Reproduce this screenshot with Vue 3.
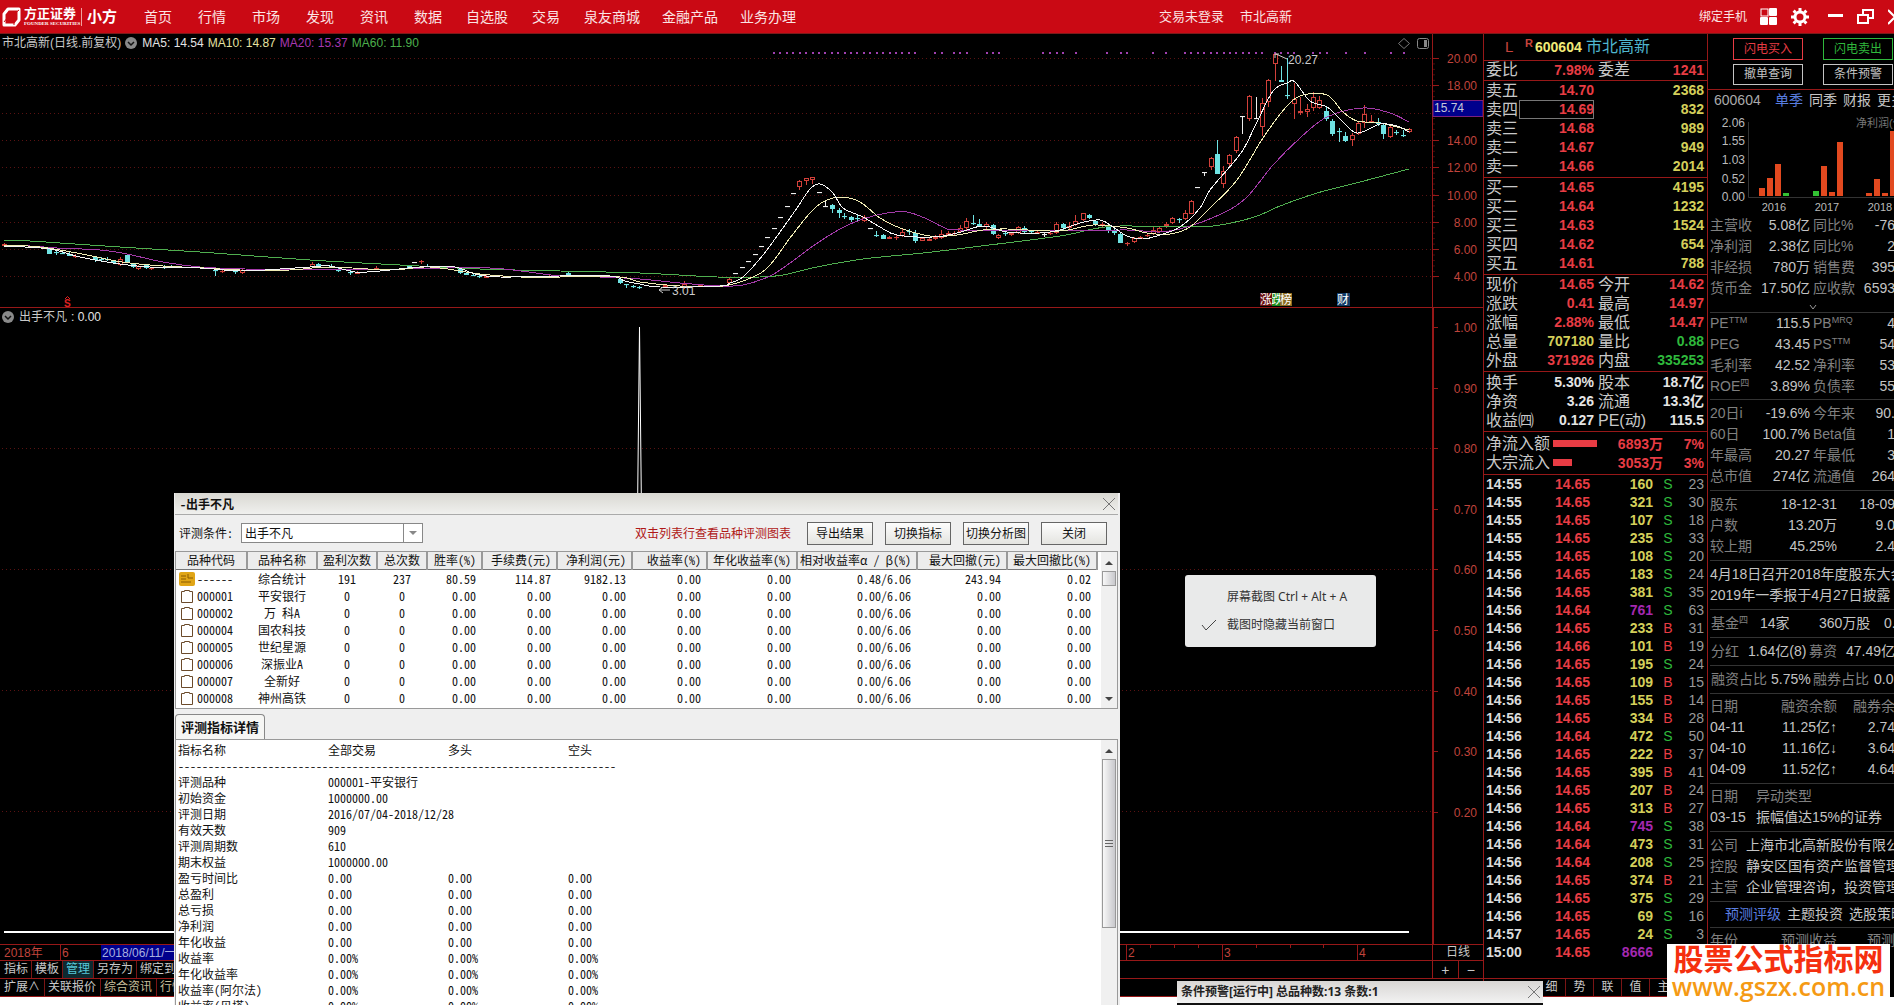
<script setup>
const nav = ['首页', '行情', '市场', '发现', '资讯', '数据', '自选股', '交易', '泉友商城', '金融产品', '业务办理']

/* Catmull-Rom smoothing of a flat x,y list */
function curve(flat) {
  const p = []
  for (let i = 0; i < flat.length; i += 2) p.push([flat[i], flat[i + 1]])
  let d = `M${p[0][0]} ${p[0][1]}`
  for (let i = 0; i < p.length - 1; i++) {
    const a = p[i - 1] || p[i], b = p[i], c = p[i + 1], e = p[i + 2] || c
    d += `C${b[0] + (c[0] - a[0]) / 6} ${b[1] + (c[1] - a[1]) / 6} ${c[0] - (e[0] - b[0]) / 6} ${c[1] - (e[1] - b[1]) / 6} ${c[0]} ${c[1]}`
  }
  return d
}
const averages = [
  { color: '#4fae4f', d: curve([4, 241, 30, 241, 60, 243, 120, 247, 200, 252, 310, 260, 400, 265, 480, 269, 560, 271, 640, 273, 717, 277, 760, 277, 783, 275, 817, 267, 863, 259, 923, 253, 973, 247, 1060, 236, 1093, 229, 1120, 226, 1187, 227, 1213, 226, 1240, 221, 1260, 215, 1280, 206, 1317, 193, 1360, 182, 1409, 169]) },
  { color: '#a33aa8', d: curve([4, 246, 30, 246, 57, 248, 100, 250, 127, 254, 163, 262, 200, 267, 245, 269, 300, 269, 400, 269, 490, 268, 560, 276, 600, 277, 640, 279, 680, 283, 720, 286, 743, 285, 770, 276, 790, 263, 813, 246, 840, 229, 863, 219, 887, 213, 907, 212, 927, 219, 943, 227, 960, 230, 1060, 231, 1127, 230, 1160, 232, 1187, 227, 1223, 213, 1247, 197, 1273, 165, 1300, 138, 1327, 117, 1363, 108, 1390, 113, 1409, 122]) },
  { color: '#f0ecb4', d: curve([4, 245, 40, 247, 82, 254, 122, 262, 163, 266, 204, 268, 240, 270, 290, 270, 330, 267, 390, 270, 430, 267, 480, 274, 520, 277, 560, 277, 620, 277, 640, 282, 680, 286, 723, 286, 753, 277, 770, 265, 790, 238, 810, 213, 823, 202, 840, 197, 860, 202, 880, 218, 900, 228, 930, 236, 957, 235, 983, 230, 1007, 229, 1060, 231, 1093, 225, 1127, 228, 1147, 233, 1170, 234, 1190, 227, 1210, 208, 1237, 180, 1263, 138, 1287, 106, 1303, 95, 1327, 95, 1343, 112, 1357, 121, 1380, 123, 1409, 130]) },
  { color: '#f4f4f4', d: curve([4, 246, 50, 249, 80, 257, 120, 264, 150, 267, 200, 268, 240, 271, 280, 269, 310, 267, 330, 266, 355, 272, 380, 271, 420, 267, 455, 267, 475, 274, 500, 277, 560, 276, 610, 276, 625, 281, 640, 284, 660, 287, 720, 286, 730, 283, 743, 277, 763, 255, 780, 232, 797, 208, 810, 189, 820, 184, 833, 193, 843, 208, 863, 217, 880, 227, 897, 235, 933, 237, 957, 233, 983, 226, 1007, 232, 1040, 233, 1060, 230, 1080, 223, 1100, 220, 1113, 227, 1127, 236, 1143, 239, 1160, 235, 1180, 227, 1200, 208, 1210, 190, 1227, 170, 1243, 150, 1257, 122, 1273, 91, 1287, 83, 1295, 82, 1310, 101, 1327, 107, 1340, 119, 1357, 133, 1380, 124, 1397, 126, 1409, 132]) },
]

/* kind, x, high, body top, body bottom, low */
const candles = [
  ['u', 4, 243, 244, 246, 247], ['d', 49, 248, 249, 254, 254], ['d', 56, 250, 252, 253, 255], ['d', 62, 251, 253, 254, 254], ['d', 69, 252, 254, 256, 256], ['u', 75, 254, 256, 257, 258],
  ['d', 95, 256, 257, 260, 262], ['d', 101, 257, 259, 260, 261], ['d', 107, 257, 259, 260, 261], ['d', 113, 260, 261, 263, 264], ['u', 120, 257, 259, 265, 266], ['d', 127, 254, 255, 262, 263], ['d', 133, 263, 264, 267, 268], ['u', 138, 265, 266, 269, 270],
  ['d', 146, 264, 265, 268, 269], ['u', 151, 267, 268, 269, 270], ['d', 164, 265, 267, 268, 269], ['d', 171, 265, 266, 268, 268], ['d', 215, 269, 270, 271, 276], ['u', 222, 270, 271, 272, 273], ['d', 235, 270, 271, 272, 274], ['u', 242, 269, 270, 273, 274],
  ['u', 312, 262, 264, 267, 267], ['d', 318, 263, 264, 266, 266], ['d', 331, 264, 266, 267, 267], ['d', 338, 268, 270, 271, 272], ['d', 350, 270, 272, 273, 275], ['u', 357, 271, 272, 274, 274], ['u', 376, 266, 268, 269, 270],
  ['d', 409, 265, 266, 268, 269], ['w', 414, 262, 262, 263, 263], ['u', 421, 260, 261, 262, 264], ['d', 427, 264, 266, 267, 267], ['d', 460, 267, 269, 273, 274], ['d', 466, 272, 273, 275, 275], ['d', 473, 273, 275, 276, 276], ['d', 479, 275, 276, 277, 278], ['u', 486, 275, 276, 278, 278],
  ['u', 549, 275, 276, 278, 278], ['d', 568, 271, 273, 275, 275], ['d', 620, 278, 279, 283, 284], ['d', 626, 284, 284, 285, 288], ['d', 633, 285, 286, 287, 288], ['d', 639, 286, 287, 288, 289],
  ['u', 665, 284, 285, 287, 287], ['u', 684, 281, 284, 288, 289], ['u', 700, 284, 285, 286, 286], ['u', 729, 278, 279, 283, 283],
  ['w', 735, 273, 273, 274, 274], ['w', 742, 267, 267, 268, 268], ['w', 748, 261, 261, 262, 262], ['w', 755, 254, 254, 255, 255], ['w', 761, 246, 246, 247, 247], ['w', 767, 237, 237, 238, 238], ['w', 774, 228, 228, 229, 229], ['w', 780, 217, 217, 218, 218], ['w', 787, 206, 206, 207, 207], ['w', 793, 193, 193, 194, 194],
  ['u', 799, 180, 181, 187, 190], ['u', 806, 178, 178, 181, 185], ['u', 812, 177, 177, 180, 184], ['w', 819, 192, 192, 193, 193], ['w', 825, 201, 206, 207, 207], ['d', 832, 204, 205, 209, 213], ['d', 839, 208, 210, 213, 218], ['d', 844, 213, 216, 217, 219], ['d', 851, 216, 217, 220, 222], ['d', 857, 215, 218, 219, 221], ['u', 864, 215, 217, 221, 222],
  ['w', 870, 228, 228, 229, 229], ['d', 876, 231, 235, 236, 237], ['d', 883, 234, 235, 239, 239], ['u', 889, 236, 237, 239, 239], ['u', 896, 235, 237, 238, 240], ['u', 902, 228, 232, 236, 237], ['d', 909, 229, 231, 232, 235], ['d', 915, 230, 233, 241, 243], ['u', 922, 237, 238, 241, 241], ['u', 929, 238, 239, 241, 241], ['u', 935, 235, 237, 239, 240], ['u', 941, 230, 234, 238, 239], ['u', 948, 231, 233, 235, 236], ['u', 954, 231, 233, 234, 236], ['u', 960, 225, 228, 232, 233],
  ['u', 966, 218, 221, 228, 230], ['d', 973, 215, 223, 224, 225], ['d', 979, 219, 224, 226, 227], ['u', 986, 222, 224, 227, 230], ['d', 993, 224, 225, 234, 235], ['u', 998, 234, 235, 238, 239], ['d', 1005, 231, 233, 234, 236], ['u', 1011, 232, 233, 235, 236], ['u', 1018, 226, 227, 233, 234], ['d', 1024, 226, 228, 232, 233], ['d', 1031, 230, 231, 232, 234], ['u', 1037, 231, 232, 234, 234], ['w', 1044, 232, 234, 235, 237], ['u', 1050, 230, 233, 234, 235], ['u', 1056, 222, 224, 233, 234],
  ['d', 1063, 223, 224, 228, 230], ['u', 1069, 222, 226, 228, 229], ['u', 1075, 215, 221, 225, 226], ['u', 1083, 213, 213, 220, 221], ['d', 1089, 214, 215, 218, 219], ['d', 1095, 220, 221, 225, 226], ['u', 1102, 222, 224, 225, 227], ['d', 1108, 223, 225, 230, 233], ['d', 1114, 229, 230, 233, 235], ['d', 1120, 233, 234, 243, 243], ['u', 1127, 242, 243, 244, 246], ['u', 1134, 237, 238, 242, 243], ['u', 1140, 236, 237, 239, 239], ['u', 1147, 233, 235, 236, 237], ['u', 1153, 226, 230, 234, 235], ['u', 1159, 226, 228, 232, 233], ['u', 1166, 222, 224, 226, 228],
  ['u', 1172, 217, 218, 223, 224], ['d', 1179, 218, 219, 220, 223], ['u', 1185, 210, 213, 219, 220], ['u', 1191, 200, 201, 214, 214], ['w', 1197, 187, 187, 188, 188], ['w', 1204, 172, 172, 173, 176], ['u', 1211, 157, 158, 167, 170], ['d', 1217, 140, 154, 174, 174], ['u', 1223, 166, 171, 184, 188], ['u', 1229, 154, 155, 164, 167], ['u', 1236, 136, 137, 151, 153], ['w', 1242, 116, 116, 117, 134], ['u', 1249, 95, 96, 119, 121], ['w', 1256, 97, 118, 119, 119], ['u', 1262, 98, 103, 127, 136], ['u', 1268, 79, 80, 102, 107], ['u', 1275, 53, 54, 64, 81],
  ['d', 1281, 66, 80, 82, 82], ['d', 1287, 58, 95, 96, 99], ['u', 1294, 83, 99, 104, 119], ['u', 1300, 97, 111, 113, 115], ['u', 1307, 104, 109, 112, 117], ['u', 1313, 92, 97, 108, 111], ['u', 1319, 96, 100, 108, 109], ['d', 1326, 106, 111, 119, 121], ['d', 1332, 119, 121, 134, 136], ['d', 1339, 128, 131, 132, 142], ['d', 1345, 132, 136, 141, 142], ['u', 1352, 133, 135, 140, 146], ['u', 1358, 121, 123, 134, 135], ['u', 1364, 105, 114, 123, 128], ['u', 1371, 115, 121, 122, 123],
  ['d', 1378, 118, 122, 124, 126], ['d', 1383, 124, 125, 134, 139], ['u', 1390, 126, 127, 137, 138], ['d', 1396, 130, 132, 133, 135], ['d', 1403, 130, 135, 136, 137], ['u', 1409, 128, 129, 132, 133],
]
const run = (a, n) => Array.from({ length: n }, (_, i) => a + i * 6.42)
const dots = [...run(773, 23), 934, 941, 953, 959, 966, 986, 992, 998, 1042, 1049, 1056, 1062, 1075, 1106, 1120, 1126, 1152, 1165, ...run(1184, 13), 1274, 1280, 1287, 1293, 1312, 1319, 1326, 1345, 1364, 1390, 1403]
const priceTicks = ['20.00', '18.00', '16.00', '14.00', '12.00', '10.00', '8.00', '6.00', '4.00'].map((t, i) => ({ t, y: Math.round(58 + i * 27.3) }))
const unitTicks = ['1.00', '0.90', '0.80', '0.70', '0.60', '0.50', '0.40', '0.30', '0.20'].map((t, i) => ({ t, y: Math.round(327 + i * 60.6) }))

const sells = [['卖五', '14.70', 2368], ['卖四', '14.69', 832], ['卖三', '14.68', 989], ['卖二', '14.67', 949], ['卖一', '14.66', 2014]]
const buys = [['买一', '14.65', 4195], ['买二', '14.64', 1232], ['买三', '14.63', 1524], ['买四', '14.62', 654], ['买五', '14.61', 788]]
const stats = [
  ['现价', '14.65', 'r', '今开', '14.62', 'r'], ['涨跌', '0.41', 'r', '最高', '14.97', 'r'], ['涨幅', '2.88%', 'r', '最低', '14.47', 'r'],
  ['总量', '707180', 'y', '量比', '0.88', 'g'], ['外盘', '371926', 'r', '内盘', '335253', 'g'],
]
const basics = [['换手', '5.30%', 'w', '股本', '18.7亿', 'w'], ['净资', '3.26', 'w', '流通', '13.3亿', 'w'], ['收益㈣', '0.127', 'w', 'PE(动)', '115.5', 'w']]
const ticks = `14:55 14.65 160 S 23
14:55 14.65 321 S 30
14:55 14.65 107 S 18
14:55 14.65 235 S 33
14:55 14.65 108 S 20
14:56 14.65 183 S 24
14:56 14.65 381 S 35
14:56 14.64 761 S 63
14:56 14.65 233 B 31
14:56 14.66 101 B 19
14:56 14.65 195 S 24
14:56 14.65 109 B 15
14:56 14.65 155 B 14
14:56 14.65 334 B 28
14:56 14.64 472 S 50
14:56 14.65 222 B 37
14:56 14.65 395 B 41
14:56 14.65 207 B 24
14:56 14.65 313 B 27
14:56 14.64 745 S 38
14:56 14.64 473 S 31
14:56 14.64 208 S 25
14:56 14.65 374 B 21
14:56 14.65 375 S 29
14:56 14.65 69 S 16
14:57 14.65 24 S 3
15:00 14.65 8666`.split('\n').map((l) => l.split(' '))

const bars = [[1759, 8], [1767, 18], [1775, 32], [1783, 3, 1], [1813, 5, 1], [1821, 30], [1829, 4], [1837, 54], [1866, 3], [1874, 17], [1882, 3], [1890, 65]]
const finance = [['主营收', '5.08亿', '同比%', '-76'], ['净利润', '2.38亿', '同比%', '2'], ['非经损', '780万', '销售费', '395'], ['货币金', '17.50亿', '应收款', '6593']]
const ratios = [['PE', '115.5', 'PB', '4', 'TTM', 'MRQ'], ['PEG', '43.45', 'PS', '54', '', 'TTM'], ['毛利率', '42.52', '净利率', '53'], ['ROE', '3.89%', '负债率', '55', '四', '']]
const trend = [['20日i', '-19.6%', '今年来', '90.'], ['60日', '100.7%', 'Beta值', '1'], ['年最高', '20.27', '年最低', '3'], ['总市值', '274亿', '流通值', '264']]
const holders = [['股东', '18-12-31', '18-09'], ['户数', '13.20万', '9.0'], ['较上期', '45.25%', '2.4']]
const margin = [['04-11', '11.25亿↑', '2.74'], ['04-10', '11.16亿↓', '3.64'], ['04-09', '11.52亿↑', '4.64']]
const company = [['公司', '上海市北高新股份有限公'], ['控股', '静安区国有资产监督管理'], ['主营', '企业管理咨询，投资管理']]

const cols = [71, 70, 60, 50, 55, 75, 75, 75, 90, 120, 90, 90]
const heads = ['品种代码', '品种名称', '盈利次数', '总次数', '胜率(%)', '手续费(元)', '净利润(元)', '收益率(%)', '年化收益率(%)', '相对收益率α / β(%)', '最大回撤(元)', '最大回撤比(%)']
const zero = (code, name) => [code, name, '0', '0', '0.00', '0.00', '0.00', '0.00', '0.00', '0.00/6.06', '0.00', '0.00']
const rows = [
  ['------', '综合统计', '191', '237', '80.59', '114.87', '9182.13', '0.00', '0.00', '0.48/6.06', '243.94', '0.02'],
  zero('000001', '平安银行'), zero('000002', '万 科A'), zero('000004', '国农科技'), zero('000005', '世纪星源'),
  zero('000006', '深振业A'), zero('000007', '全新好'), zero('000008', '神州高铁'),
]
const details = [
  ['评测品种', '000001-平安银行'], ['初始资金', '1000000.00'], ['评测日期', '2016/07/04-2018/12/28'], ['有效天数', '909'], ['评测周期数', '610'], ['期末权益', '1000000.00'],
  ...['盈亏时间比', '总盈利', '总亏损', '净利润', '年化收益'].map((n) => [n, '0.00', '0.00', '0.00']),
  ...['收益率', '年化收益率', '收益率(阿尔法)', '收益率(贝塔)'].map((n) => [n, '0.00%', '0.00%', '0.00%']),
]
const dashes = '-'.repeat(73)
</script>

<template>
  <div class="app">
    <header class="top">
      <div class="brand">
        <svg width="19" height="20" viewBox="0 0 19 20"><path d="M6 2H17V13L13 18H2V7Z" fill="none" stroke="#fff" stroke-width="3" stroke-linejoin="round" /><path d="M12 18V7L17 3M2 15L6 10" stroke="#ca0914" stroke-width="1" fill="none" /></svg>
        <div class="brand-name"><b>方正证券</b><small>FOUNDER SECURITIES</small></div>
        <i></i><strong>小方</strong>
      </div>
      <nav><a v-for="n in nav" :key="n" href="#">{{ n }}</a></nav>
      <div class="status"><span>交易未登录</span><span>市北高新</span></div>
      <div class="tools">
        <a href="#">绑定手机</a>
        <button aria-label="布局"><svg width="17" height="17" viewBox="0 0 17 17"><rect x="1" y="1" width="7" height="7" fill="none" stroke="#fff" /><rect x="9" y="0" width="8" height="8" rx="1" fill="#fff" /><rect x="0" y="9" width="8" height="8" rx="1" fill="#fff" /><rect x="9" y="9" width="8" height="8" rx="1" fill="#fff" /></svg></button>
        <button aria-label="设置"><svg width="20" height="20" viewBox="0 0 20 20"><circle cx="10" cy="10" r="5" fill="none" stroke="#fff" stroke-width="3" /><g stroke="#fff" stroke-width="3"><path d="M10 1V4M10 16V19M1 10H4M16 10H19M3.600 3.600L5.700 5.700M14.300 14.300L16.400 16.400M3.600 16.400L5.700 14.300M14.300 5.700L16.400 3.600" /></g></svg></button>
        <button aria-label="最小化"><svg width="16" height="18" viewBox="0 0 16 18"><path d="M0 7.500H15" stroke="#fff" stroke-width="3" /></svg></button>
        <button aria-label="还原"><svg width="18" height="18" viewBox="0 0 18 18"><path d="M6 6V2H16V10H12M1 7H11V15H1Z" fill="none" stroke="#fff" stroke-width="2" /></svg></button>
        <button aria-label="退出"><svg width="6" height="18" viewBox="0 0 6 18"><path d="M0 2L14 16M0 16L14 2" stroke="#fff" stroke-width="2" /></svg></button>
      </div>
    </header>

    <main>
      <section class="market">
        <div class="pane">
          <div class="plot">
            <div class="legend">
              <span>市北高新(日线.前复权)</span>
              <svg width="13" height="13" viewBox="0 0 13 13"><circle cx="6" cy="6" r="6" fill="#8a8a8a" /><path d="M3 5L6 8L9 5" fill="none" stroke="#111" stroke-width="1.500" /></svg>
              <span class="w">MA5: 14.54</span><span class="ma10">MA10: 14.87</span><span class="ma20">MA20: 15.37</span><span class="ma60">MA60: 11.90</span>
            </div>
            <svg class="chart" viewBox="0 34 1432 273">
              <path v-for="t in priceTicks" :key="t.t" :d="`M2 ${t.y + 0.5}H1432`" class="grid" />
              <rect v-for="x in dots" :key="x" :x="Math.round(x)" y="52" width="2" height="2" fill="#a040b0" />
              <g v-for="c in candles" :key="c[1]" :class="'k' + c[0]">
                <path :d="`M${c[1] + 0.5} ${c[2]}V${c[3]}M${c[1] + 0.5} ${c[4]}V${c[5]}`" />
                <rect :x="c[1] - 1.5" :y="c[3] + 0.5" :width="4" :height="Math.max(c[4] - c[3] - 1, 0.1)" />
              </g>
              <path v-for="m in averages" :key="m.color" :d="m.d" fill="none" :stroke="m.color" shape-rendering="crispEdges" />
              <path d="M1276 54L1287 59M1275 58V54H1279M659 290H670M663 287L659 290L663 293" fill="none" stroke="#ccc" />
              <text x="1288" y="64" class="mark">20.27</text>
              <text x="672" y="295" class="mark">3.01</text>
              <path d="M65 299L67.500 296.500L70 299" fill="none" stroke="#e02020" /><text x="64" y="307" class="sell">S</text>
              <rect x="1272" y="293" width="9" height="13" fill="#1c8a1c" /><text x="1271" y="304" class="badge">跌</text>
              <rect x="1260" y="293" width="12" height="13" fill="#6a1010" /><text x="1260" y="304" class="badge">涨</text>
              <rect x="1280" y="293" width="12" height="13" fill="#8a6a20" /><text x="1280" y="304" class="badge">榜</text>
              <rect x="1337" y="293" width="13" height="13" fill="#123a66" /><text x="1337" y="304" class="badge">财</text>
              <path d="M1404 38.500L1409.500 43.500L1404 48.500L1398.500 43.500Z" fill="none" stroke="#777" />
              <rect x="1417.500" y="38.500" width="11" height="10" rx="2" fill="none" stroke="#888" /><rect x="1424" y="40" width="3" height="7" fill="#888" />
            </svg>
          </div>
          <svg class="axis" viewBox="1432 34 51 273">
            <path d="M1432.500 34V307" class="rule" />
            <path v-for="i in 41" :key="i" :d="`M1433 ${53 + i * 5.46}h2`" stroke="#4a0b0b" />
            <g v-for="t in priceTicks" :key="t.t"><path :d="`M1433 ${t.y + 0.5}h6`" class="rule" /><text v-if="t.t !== '16.00'" x="1477" :y="t.y + 5">{{ t.t }}</text></g>
            <rect x="1433" y="100.500" width="50" height="16" fill="#00008c" stroke="#7a2080" /><text x="1434" y="112" class="cursor">15.74</text>
          </svg>
        </div>

        <div class="pane line-top">
          <div class="plot">
            <div class="legend">
              <svg width="13" height="13" viewBox="0 0 13 13"><circle cx="6" cy="6" r="6" fill="#8a8a8a" /><path d="M3 5L6 8L9 5" fill="none" stroke="#111" stroke-width="1.500" /></svg>
              <span>出手不凡</span><span class="w">: 0.00</span>
            </div>
            <svg class="chart" viewBox="0 308 1432 636">
              <path v-for="y in [448, 569, 690, 811]" :key="y" :d="`M2 ${y + 0.5}H1432`" class="grid" />
              <path d="M633 932L639.500 327L646 932" fill="none" stroke="#fff" />
              <path d="M4 932H633M646 932H1409" fill="none" stroke="#fff" stroke-width="2" />
            </svg>
          </div>
          <svg class="axis" viewBox="1432 308 51 636">
            <path d="M1433 308V944" class="rule" stroke-width="2" />
            <g v-for="t in unitTicks" :key="t.t"><path :d="`M1433 ${t.y + 0.5}h5`" class="rule" /><text x="1477" :y="t.y + 5">{{ t.t }}</text></g>
          </svg>
        </div>

        <div class="pane line-top">
          <div class="plot">
            <svg class="chart" viewBox="0 945 1432 15">
              <path d="M60.500 945V960M1126.500 945V960M1222.500 945V960M1357.500 945V960M1150.500 945V948M1174.500 945V948M1198.500 945V948M1256.500 945V948M1290.500 945V948M1323.500 945V948" class="rule" />
              <rect x="101" y="945" width="200" height="15" fill="#00008c" />
              <text x="4" y="957" class="date">2018年</text><text x="62" y="957" class="date">6</text><text x="102" y="957" class="date hot">2018/06/11/一</text>
              <text x="1128" y="957" class="date">2</text><text x="1224" y="957" class="date">3</text><text x="1359" y="957" class="date">4</text>
            </svg>
          </div>
          <div class="axis-cell">日线</div>
        </div>
        <div class="pane line-top">
          <div class="tabs"><a href="#">指标</a><a href="#">模板</a><a href="#" class="on">管理</a><a href="#">另存为</a><a href="#">绑定到</a></div>
          <div class="axis-cell zoomers"><button>+</button><button>−</button></div>
        </div>
        <div class="pane line-top last">
          <div class="tabs warm"><a href="#">扩展∧</a><a href="#">关联报价</a><a href="#">综合资讯</a><a href="#">行情</a></div>
        </div>
      </section>

      <section class="quote">
        <h1><span>L</span><sup>R</sup><b>600604</b><em>市北高新</em></h1>
        <div class="grp"><div class="q ratio"><span>委比</span><b class="r">7.98%</b><span>委差</span><b class="r">1241</b></div></div>
        <div class="grp">
          <div v-for="s in sells" :key="s[0]" class="q"><span>{{ s[0] }}</span><b class="r" :class="{ boxed: s[0] === '卖四' }">{{ s[1] }}</b><span></span><b class="y">{{ s[2] }}</b></div>
        </div>
        <div class="grp">
          <div v-for="s in buys" :key="s[0]" class="q"><span>{{ s[0] }}</span><b class="r">{{ s[1] }}</b><span></span><b class="y">{{ s[2] }}</b></div>
        </div>
        <div class="grp">
          <div v-for="s in stats" :key="s[0]" class="q"><span>{{ s[0] }}</span><b :class="s[2]">{{ s[1] }}</b><span>{{ s[3] }}</span><b :class="s[5]">{{ s[4] }}</b></div>
        </div>
        <div class="grp wide">
          <div v-for="s in basics" :key="s[0]" class="q"><span>{{ s[0] }}</span><b :class="s[2]">{{ s[1] }}</b><span>{{ s[3] }}</span><b :class="s[5]">{{ s[4] }}</b></div>
        </div>
        <div class="grp flows">
          <div class="flow"><span>净流入额</span><i style="width: 44px"></i><b>6893万</b><b class="pct">7%</b></div>
          <div class="flow"><span>大宗流入</span><i style="width: 19px"></i><b>3053万</b><b class="pct">3%</b></div>
        </div>
        <table class="deals">
          <colgroup><col style="width: 40px" /><col style="width: 66px" /><col style="width: 63px" /><col style="width: 30px" /><col /></colgroup>
          <tbody>
            <tr v-for="(t, i) in ticks" :key="i">
              <td>{{ t[0] }}</td><td class="r">{{ t[1] }}</td><td :class="+t[2] > 500 ? 'm' : 'y'">{{ t[2] }}</td><td :class="t[3] === 'B' ? 'r' : 'g'">{{ t[3] }}</td><td class="n">{{ t[4] }}</td>
            </tr>
          </tbody>
        </table>
        <div class="quote-tabs"><a href="#">细</a><a href="#">势</a><a href="#">联</a><a href="#">值</a><a href="#">主</a></div>
      </section>

      <aside class="info">
        <div class="orders">
          <button class="r">闪电买入</button><button class="g">闪电卖出</button><button>撤单查询</button><button>条件预警</button>
        </div>
        <div class="periods"><span>600604</span><a href="#" class="on">单季</a><a href="#">同季</a><a href="#">财报</a><a href="#">更多</a></div>
        <svg class="bars" viewBox="1708 112 186 104" width="186" height="104">
          <path d="M1748.500 123V198.500H1894" fill="none" stroke="#333" />
          <rect v-for="b in bars" :key="b[0]" :x="b[0]" :y="197 - b[1]" width="6" :height="b[1]" :fill="b[2] ? '#33c233' : '#e2491f'" />
          <g class="ylab"><text x="1745" y="128">2.06</text><text x="1745" y="146">1.55</text><text x="1745" y="165">1.03</text><text x="1745" y="184">0.52</text><text x="1745" y="202">0.00</text></g>
          <g class="xlab"><text x="1774" y="212">2016</text><text x="1827" y="212">2017</text><text x="1880" y="212">2018</text></g>
          <text x="1856" y="128" class="unit">净利润(亿)</text>
        </svg>
        <div class="blk flat"><div v-for="f in finance" :key="f[0]" class="pair"><span>{{ f[0] }}</span><b>{{ f[1] }}</b><span>{{ f[2] }}</span><b>{{ f[3] }}</b></div><div class="more"><svg width="8" height="6" viewBox="0 0 8 6"><path d="M1 1L4 5L7 1" fill="none" stroke="#999" /></svg></div></div>
        <div class="blk snug"><div v-for="f in ratios" :key="f[0]" class="pair"><span>{{ f[0] }}<sup v-if="f[4]">{{ f[4] }}</sup></span><b>{{ f[1] }}</b><span>{{ f[2] }}<sup v-if="f[5]">{{ f[5] }}</sup></span><b>{{ f[3] }}</b></div></div>
        <div class="blk"><div v-for="f in trend" :key="f[0]" class="pair"><span>{{ f[0] }}</span><b>{{ f[1] }}</b><span>{{ f[2] }}</span><b>{{ f[3] }}</b></div></div>
        <div class="blk"><div v-for="f in holders" :key="f[0]" class="trio"><span>{{ f[0] }}</span><b>{{ f[1] }}</b><b>{{ f[2] }}</b></div></div>
        <div class="blk news"><p>4月18日召开2018年度股东大会</p><p>2019年一季报于4月27日披露</p></div>
        <div class="blk"><div class="spread fund"><span>基金<sup>四</sup></span><b>14家</b><b>360万股</b><b>0.</b></div></div>
        <div class="blk"><div class="spread bonus"><span>分红</span><b>1.64亿(8)</b><span>募资</span><b>47.49亿</b></div></div>
        <div class="blk"><div class="spread loan"><span>融资占比</span><b>5.75%</b><span>融券占比</span><b>0.0</b></div></div>
        <div class="blk tight">
          <div class="trio"><span>日期</span><span>融资余额</span><span>融券余</span></div>
          <div v-for="f in margin" :key="f[0]" class="trio"><b>{{ f[0] }}</b><b>{{ f[1] }}</b><b>{{ f[2] }}</b></div>
        </div>
        <div class="blk tight"><div class="event"><span>日期</span><span>异动类型</span></div><div class="event"><b>03-15</b><b>振幅值达15%的证券</b></div></div>
        <div class="blk"><div v-for="c in company" :key="c[0]" class="firm"><span>{{ c[0] }}</span><b>{{ c[1] }}</b></div></div>
        <div class="blk topics"><a href="#" class="on">预测评级</a><a href="#">主题投资</a><a href="#">选股策略</a></div>
        <div class="blk tight"><div class="trio"><span>年份</span><span>预测收益</span><span>预测</span></div></div>
      </aside>
    </main>
    <div class="strip"></div>

    <section class="dialog">
      <div class="dlg-title"><b>-出手不凡</b><button aria-label="关闭窗口"><svg width="12" height="12" viewBox="0 0 12 12"><path d="M0 0L12 12M0 12L12 0" stroke="#777" /></svg></button></div>
      <div class="dlg-bar">
        <label for="cond">评测条件:</label>
        <div class="combo"><select id="cond"><option>出手不凡</option></select></div>
        <em>双击列表行查看品种评测图表</em>
        <button>导出结果</button><button>切换指标</button><button>切换分析图</button><button>关闭</button>
      </div>
      <div class="list">
        <table>
          <colgroup><col v-for="(c, i) in cols" :key="i" :style="{ width: c + 'px' }" /></colgroup>
          <thead><tr><th v-for="h in heads" :key="h">{{ h }}</th></tr></thead>
          <tbody>
            <tr v-for="(r, i) in rows" :key="i">
              <td v-for="(c, j) in r" :key="j">
                <template v-if="j === 0">
                  <svg v-if="i === 0" width="16" height="14" viewBox="0 0 16 14"><rect width="16" height="14" rx="2" fill="#e0a516" /><path d="M2 4H7M2 7H7M2 10H12M9 2V6H14" stroke="#8a5a00" fill="none" /></svg>
                  <svg v-else width="16" height="14" viewBox="0 0 16 14"><path d="M2.500 2.500H5.500V1.500H10.500V2.500H13.500V13.500H2.500Z" fill="#fff" stroke="#6b4a2a" /></svg>
                </template>{{ c }}
              </td>
            </tr>
          </tbody>
        </table>
        <div class="scroll"><svg width="8" height="5" viewBox="0 0 8 5"><path d="M0 5L4 1L8 5Z" fill="#444" /></svg><i class="thumb short"></i><svg class="down" width="8" height="5" viewBox="0 0 8 5"><path d="M0 0L4 4L8 0Z" fill="#444" /></svg></div>
      </div>
      <div class="tabrow"><button>评测指标详情</button></div>
      <div class="detail">
        <table>
          <colgroup><col style="width: 150px" /><col style="width: 120px" /><col style="width: 120px" /><col /></colgroup>
          <thead><tr><th>指标名称</th><th>全部交易</th><th>多头</th><th>空头</th></tr></thead>
          <tbody>
            <tr><td colspan="4">{{ dashes }}</td></tr>
            <tr v-for="d in details" :key="d[0]"><td>{{ d[0] }}</td><td>{{ d[1] }}</td><td>{{ d[2] }}</td><td>{{ d[3] }}</td></tr>
          </tbody>
        </table>
        <div class="scroll"><svg width="8" height="5" viewBox="0 0 8 5"><path d="M0 5L4 1L8 5Z" fill="#444" /></svg><i class="thumb long"></i></div>
      </div>
    </section>

    <div class="popup">
      <button><i></i>屏幕截图 Ctrl + Alt + A</button>
      <button><i><svg width="16" height="12" viewBox="0 0 16 12"><path d="M1 6L5 11L15 1" fill="none" stroke="#444" /></svg></i>截图时隐藏当前窗口</button>
    </div>

    <div class="alert"><b>条件预警[运行中] 总品种数:13 条数:1</b><button aria-label="关闭预警"><svg width="12" height="12" viewBox="0 0 12 12"><path d="M0 0L12 12M0 12L12 0" stroke="#777" /></svg></button></div>

    <div class="watermark"><b>股票公式指标网</b><span>www.gszx.com.cn</span></div>
  </div>
</template>

<style>
body { background: #000; }
</style>

<style scoped>
* { box-sizing: border-box; }
.app { position: relative; height: 100vh; overflow: hidden; background: #000; color: #c8c8c8; font: 12px/18px "Liberation Sans", "Noto Sans CJK SC", sans-serif; display: flex; flex-direction: column; }
a { color: inherit; text-decoration: none; }
button { font: inherit; color: inherit; background: none; border: 0; padding: 0; }
svg { display: block; }
b, em, strong, th, h1 { font-weight: inherit; font-style: normal; }
.r { color: #e83c44; } .y { color: #d4cf5a; } .g { color: #2fb83c; } .w { color: #e4e4e4; } .m { color: #a428b0; }

.top { height: 34px; flex: none; background: #ca0914; border-bottom: 1px solid #7a1a1a; color: #fbe4e4; display: flex; align-items: center; position: relative; }
.brand { width: 142px; display: flex; align-items: center; padding-left: 2px; color: #fff; }
.brand-name { margin-left: 3px; width: 52px; }
.brand-name b { display: block; font-size: 13px; font-weight: 700; line-height: 14px; }
.brand-name small { display: block; font: 700 5px/5px "Liberation Serif", serif; white-space: nowrap; }
.brand > i { width: 1px; height: 18px; background: #f0a0a0; margin: 0 5px; }
.brand strong { font-size: 15px; font-weight: 700; }
nav { display: flex; gap: 22px; font-size: 14px; }
nav a { min-width: 32px; text-align: center; }
.status { display: flex; gap: 16px; font-size: 13px; position: absolute; left: 1159px; }
.tools { margin-left: auto; display: flex; align-items: center; gap: 13px; }
.tools button:nth-child(4) { margin-left: 5px; }

main { display: flex; flex: none; }
.market { flex: 1; min-width: 0; }
.pane { display: flex; }
.line-top { border-top: 1px solid #971818; }
.plot { flex: 1; min-width: 0; position: relative; }
.chart { width: 100%; height: auto; border-left: 0; }
.legend { position: absolute; left: 2px; top: 0; display: flex; align-items: center; gap: 4px; white-space: nowrap; }
.ma10 { color: #e6e2a0; } .ma20 { color: #a838b0; } .ma60 { color: #4caf4c; }
.grid { stroke: #5a1212; stroke-dasharray: 1 3; }
.rule { stroke: #971818; fill: none; }
.ku path, .ku rect { stroke: #d2403a; fill: #000; }
.kd path, .kd rect { stroke: #6fe3e3; fill: #6fe3e3; }
.kw path, .kw rect { stroke: #eee; fill: #eee; }
.mark { fill: #ccc; font-size: 12px; }
.sell { fill: #e02020; font: 700 10px "Liberation Sans", sans-serif; }
.badge { fill: #fff; font-size: 12px; }
.axis { width: 51px; flex: none; height: auto; }
.axis text { fill: #c0443c; font-size: 12px; text-anchor: end; }
.axis text.cursor { fill: #c8c8d8; text-anchor: start; }
.date { fill: #c0443c; font-size: 12px; }
.date.hot { fill: #a8b0e0; }
.axis-cell { width: 51px; flex: none; border-left: 1px solid #971818; text-align: center; line-height: 15px; }
.tabs { flex: 1; display: flex; line-height: 17px; height: 17px; padding-left: 1px; }
.tabs a { padding: 0 3px; border-right: 1px solid #7a1515; }
.tabs a:last-child { border: 0; }
.tabs .on { color: #58c8d8; background: #0d2a30; }
.warm a { padding: 0 4px 0 3px; }
.warm a:nth-child(n + 3) { color: #c8be9a; }
.zoomers { display: flex; }
.zoomers button { flex: 1; line-height: 16px; font-size: 14px; }
.zoomers button + button { border-left: 1px solid #971818; }
.last { border-bottom: 1px solid #971818; }

.quote { width: 225px; flex: none; border-left: 1px solid #971818; border-right: 1px solid #971818; display: flex; flex-direction: column; }
.quote h1 { margin: 0; height: 26px; display: flex; align-items: center; padding-left: 21px; font-size: 15px; }
.quote h1 span { color: #c8443c; width: 20px; }
.quote h1 sup { color: #c8443c; font-size: 11px; font-weight: 700; line-height: 10px; width: 10px; align-self: flex-start; padding-top: 4px; }
.quote h1 b { color: #f0ea78; font-weight: 700; font-size: 14px; width: 51px; }
.quote h1 em { color: #4fb6cf; font-size: 16px; }
.grp { border-top: 1px solid #971818; padding: 0 0 1px; }
.grp.wide { padding: 1px 0; }
.grp.flows { padding: 2px 0; }
.q { display: grid; grid-template-columns: 33px 75px 37px 1fr; height: 19px; line-height: 19px; padding: 0 3px 0 2px; font-size: 16px; white-space: nowrap; }
.ratio { height: 18px; line-height: 18px; }
.q b { font-size: 14px; font-weight: 700; text-align: right; }
.q span:nth-child(3) { padding-left: 4px; }
.q .boxed { outline: 1px solid #777; outline-offset: -1px; }
.flow { display: flex; align-items: center; height: 19px; padding: 0 3px 0 2px; font-size: 16px; color: #c8c8c8; }
.flow span { width: 67px; }
.flow i { height: 7px; background: #e83c44; }
.flow b { margin-left: auto; color: #e83c44; font-size: 14px; font-weight: 700; }
.flow .pct { margin-left: 0; width: 41px; text-align: right; }
.deals { width: 100%; table-layout: fixed; border-collapse: collapse; border-top: 1px solid #971818; font-size: 14px; font-weight: 700; color: #dcdcdc; }
.deals td { height: 18px; line-height: 18px; padding: 0; text-align: right; }
.deals td:first-child { text-align: left; padding-left: 2px; }
.deals td:nth-child(4) { text-align: center; font-weight: 400; }
.deals td:last-child { padding-right: 3px; font-weight: 400; color: #999; }
.quote-tabs { margin-top: auto; display: flex; height: 19px; padding-left: 54px; border-top: 1px solid #971818; border-bottom: 1px solid #971818; overflow: hidden; }
.quote-tabs a { flex: 0 0 28px; text-align: center; line-height: 17px; border-right: 1px solid #7a1515; }

.info { width: 186px; height: 962px; flex: none; overflow: hidden; font-size: 14px; white-space: nowrap; color: #c4c4c4; }
.orders { display: grid; grid-template-columns: 70px 70px; column-gap: 20px; row-gap: 4px; padding: 4px 0 4px 25px; height: 56px; border-bottom: 1px solid #971818; font-size: 12px; }
.orders button { border: 1px solid currentColor; }
.periods { display: flex; height: 21px; line-height: 21px; padding-left: 6px; }
.periods span { width: 61px; flex: none; color: #aaa; }
.periods a { width: 34px; flex: none; }
.on { color: #5a7ee0; }
.ylab text, .xlab text { fill: #bbb; font-size: 11px; }
.ylab text { text-anchor: end; font-size: 12px; }
.xlab text { text-anchor: middle; }
.unit { fill: #777; font-size: 11px; }
.blk { border-top: 1px solid #333; padding: 3px 0; margin-left: 2px; }
.blk.tight { padding: 2px 0 3px; }
.blk > div, .blk > p { height: 21px; line-height: 21px; margin: 0; }
.blk span { color: #808080; }
.blk b { text-align: right; }
.blk.flat { border: 0; padding: 0; }
.blk.flat .more { height: 13px; padding: 5px 0 0 99px; }
.blk.snug { padding: 0 0 2px; }
.info sup { font-size: 9px; line-height: 9px; vertical-align: 5px; }
.pair { display: grid; grid-template-columns: 45px 55px 47px 38px; }
.pair span:nth-child(3) { padding-left: 3px; }
.trio { display: grid; grid-template-columns: 50px 77px 58px; }
.trio > :nth-child(n + 2) { text-align: right; }
.trio > b:first-child { text-align: left; }
.spread { display: grid; padding-left: 1px; }
.spread b { text-align: left; }
.fund { grid-template-columns: 49px 59px 65px 1fr; }
.bonus { grid-template-columns: 37px 61px 37px 1fr; }
.loan { grid-template-columns: 60px 42px 61px 1fr; }
.event { display: grid; grid-template-columns: 46px 1fr; }
.firm { display: grid; grid-template-columns: 36px 1fr; }
.event b, .firm b { text-align: left; }
.topics { display: flex; gap: 6px; padding: 2px 0 2px 15px; line-height: 21px; }
.strip { flex: 1; background: #fff; }

.dialog { position: absolute; left: 174px; top: 493px; width: 946px; bottom: 0; overflow: hidden; background: #efefef; color: #111; padding: 0 2px 0 1px; display: flex; flex-direction: column; font: 12px/16px "Noto Sans Mono CJK SC", "Noto Sans CJK SC", monospace; }
.dlg-title { height: 22px; flex: none; display: flex; align-items: center; justify-content: space-between; padding: 0 3px 0 5px; background: linear-gradient(#d9d8d2, #f0f0ee); border-bottom: 1px solid #aaa; }
.dlg-title b { font-weight: 700; }
.dlg-bar { height: 36px; flex: none; display: flex; align-items: center; padding: 0 11px 0 4px; }
.combo { position: relative; margin-left: 8px; width: 182px; height: 20px; }
.combo select { appearance: none; width: 100%; height: 100%; border: 1px solid #888; border-radius: 0; background: #fff; font: inherit; color: inherit; padding: 0 3px; }
.combo::before { content: ""; position: absolute; right: 19px; top: 0; bottom: 0; border-left: 1px solid #888; }
.combo::after { content: ""; position: absolute; right: 6px; top: 8px; border: 4px solid transparent; border-top-color: #888; }
.dlg-bar em { margin-left: auto; margin-right: 4px; color: #b01818; }
.dlg-bar button { width: 66px; height: 23px; margin-left: 12px; border: 1px solid #666; background: linear-gradient(#fdfdfd, #e4e4e0); }
.list { height: 158px; flex: none; display: flex; border: 1px solid #999; background: #fff; }
.list table { table-layout: fixed; border-collapse: collapse; width: 921px; flex: none; align-self: flex-start; }
.list th { height: 17px; line-height: 16px; padding: 0 5px 0 0; text-align: right; white-space: nowrap; background: #ececec; border-right: 2px solid #999; border-bottom: 1px solid #777; }
.list td { height: 17px; line-height: 17px; padding: 0 6px 0 0; text-align: right; white-space: nowrap; }
.list thead th:nth-child(-n + 4) { text-align: center; padding: 0; }
.list td:nth-child(n + 2):nth-child(-n + 4) { text-align: center; padding: 0; }
.list td:first-child { text-align: left; padding-left: 3px; }
.list td svg { display: inline-block; vertical-align: -2px; margin-right: 2px; }
.scroll { width: 16px; margin-left: auto; background: #f0f0f0; display: flex; flex-direction: column; align-items: center; padding-top: 8px; flex: none; }
.thumb { width: 14px; border: 1px solid #999; background: linear-gradient(90deg, #f8f8f8, #c8c8cc); margin-top: 6px; }
.short { height: 15px; }
.long { height: 169px; display: flex; }
.long::before { content: ""; margin: auto; width: 8px; height: 7px; background: repeating-linear-gradient(#666 0 1px, transparent 1px 3px); }
.down { margin: auto 0 6px; }
.tabrow { height: 30px; flex: none; display: flex; padding-top: 5px; }
.tabrow button { width: 90px; border: 1px solid #888; border-bottom: 0; border-radius: 4px 4px 0 0; font-weight: 700; font-size: 13px; background: #f6f6f4; }
.detail { flex: none; display: flex; background: #fff; border: 1px solid #999; padding-left: 2px; height: 300px; }
.detail table { border-collapse: collapse; table-layout: fixed; width: 860px; margin-top: 2px; align-self: flex-start; }
.detail th, .detail td { padding: 0; height: 16px; line-height: 16px; text-align: left; white-space: nowrap; }

.popup { position: absolute; left: 1185px; top: 575px; width: 191px; height: 72px; border-radius: 3px; background: #e9eaea; color: #333; font-family: "Noto Sans", "Noto Sans CJK SC", sans-serif; display: flex; flex-direction: column; justify-content: center; padding-left: 16px; }
.popup button { display: flex; align-items: center; height: 28px; }
.popup i { width: 26px; }
.alert { position: absolute; right: 351px; bottom: 0; width: 366px; height: 24px; background: linear-gradient(#d8d6d4, #f2f2f2); border-bottom: 2px solid #111; color: #222; display: flex; align-items: center; justify-content: space-between; padding: 0 3px 0 4px; font-family: "Noto Sans", "Noto Sans CJK SC", sans-serif; }
.alert b { font-weight: 700; }
.watermark { position: absolute; right: 4px; bottom: 4px; width: 223px; height: 57px; background: #fff; text-align: center; white-space: nowrap; }
.watermark b { display: block; font-size: 30px; line-height: 32px; font-weight: 700; color: #f5300f; }
.watermark span { display: block; font: 600 25px/20px "Open Sans", sans-serif; color: #f59a14; }
</style>
